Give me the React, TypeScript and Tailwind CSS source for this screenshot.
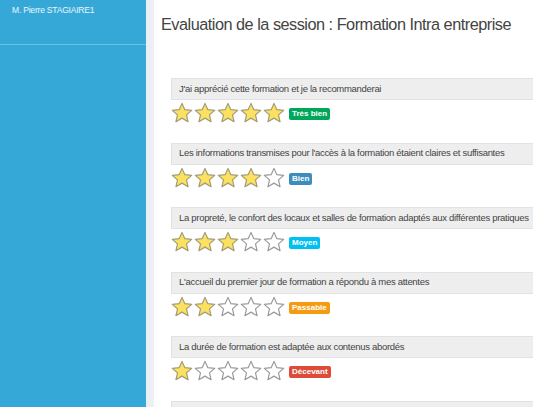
const questions = [
  { label: "J'ai apprécié cette formation et je la recommanderai", rating: 5, badge: 'Très bien', color: 'bg-[#00a65a]' },
  { label: "Les informations transmises pour l'accès à la formation étaient claires et suffisantes", rating: 4, badge: 'Bien', color: 'bg-[#3c8dbc]' },
  { label: 'La propreté, le confort des locaux et salles de formation adaptés aux différentes pratiques', rating: 3, badge: 'Moyen', color: 'bg-[#00c0ef]' },
  { label: "L'accueil du premier jour de formation a répondu à mes attentes", rating: 2, badge: 'Passable', color: 'bg-[#f39c12]' },
  { label: 'La durée de formation est adaptée aux contenus abordés', rating: 1, badge: 'Décevant', color: 'bg-[#dd4b39]' },
]

function Star({ filled }: { filled: boolean }) {
  return (
    <svg width="22" height="22" viewBox="0 0 24 24" className="shrink-0">
      <polygon
        points="12,1.5 15.1,8.4 22.6,9.1 16.9,14.1 18.6,21.5 12,17.6 5.4,21.5 7.1,14.1 1.4,9.1 8.9,8.4"
        fill={filled ? '#fbe160' : '#ffffff'}
        stroke={filled ? '#a39a78' : '#9a9a9a'}
        strokeWidth="1.3"
        strokeLinejoin="round"
      />
    </svg>
  )
}

export default function App() {
  return (
    <div className="flex w-[533px] h-[407px] overflow-hidden bg-white font-['Liberation_Sans',Arial,sans-serif]">
      <aside className="w-[146px] shrink-0 bg-[#36a8d8] flex flex-col">
        <div className="h-[45px] px-3 pt-[4px] text-[8.5px] tracking-[-0.2px] text-white/90 border-b border-[#6cc3e6]">
          M. Pierre STAGIAIRE1
        </div>
      </aside>
      <div className="w-[8px] shrink-0 bg-[#ecf0f5]" />
      <main className="flex-1 min-w-0 pl-[7px] pt-[13px]">
        <h1 className="text-[16.3px] tracking-[-0.5px] leading-[22px] text-[#444] whitespace-nowrap">
          Evaluation de la session : Formation Intra entreprise
        </h1>
        <div className="pl-[10px] pt-[43px] flex flex-col gap-[18.5px]">
          {questions.map((q) => (
            <div key={q.label} className="flex flex-col">
              <div className="w-[420px] h-[22px] bg-[#eeeeee] border border-[#e2e2e2] pl-[7px] flex items-center text-[9.5px] tracking-[-0.3px] text-[#444] whitespace-nowrap">
                {q.label}
              </div>
              <div className="flex items-center h-[22px] mt-[2px]">
                <div className="flex gap-[1px]">
                  {[1, 2, 3, 4, 5].map((i) => (
                    <Star key={i} filled={i <= q.rating} />
                  ))}
                </div>
                <span className={`${q.color} ml-[4px] mt-[2px] px-[3px] h-[12px] leading-[12px] rounded-[2px] text-[8px] font-bold text-white`}>
                  {q.badge}
                </span>
              </div>
            </div>
          ))}
          <div className="w-[420px] h-[22px] bg-[#eeeeee] border border-[#e2e2e2]" />
        </div>
      </main>
    </div>
  )
}
